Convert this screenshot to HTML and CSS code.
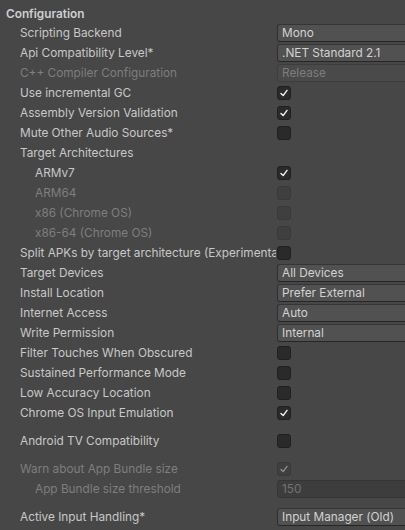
FILE: index.html
```html
<!DOCTYPE html>
<html>
<head>
<meta charset="utf-8">
<link rel="stylesheet" href="styles.css">
</head>
<body>
<div class="panel">
  <div class="header">Configuration</div>

  <div class="row"><div class="label">Scripting Backend</div><div class="field"><div class="popup">Mono</div></div></div>
  <div class="row"><div class="label">Api Compatibility Level*</div><div class="field"><div class="popup">.NET Standard 2.1</div></div></div>
  <div class="row"><div class="label dis">C++ Compiler Configuration</div><div class="field"><div class="popup off">Release</div></div></div>
  <div class="row"><div class="label">Use incremental GC</div><div class="field"><div class="cb on"><svg viewBox="0 0 14 14"><polyline points="3.5,7.5 6,10 10.5,4"/></svg></div></div></div>
  <div class="row"><div class="label">Assembly Version Validation</div><div class="field"><div class="cb on"><svg viewBox="0 0 14 14"><polyline points="3.5,7.5 6,10 10.5,4"/></svg></div></div></div>
  <div class="row"><div class="label">Mute Other Audio Sources*</div><div class="field"><div class="cb"></div></div></div>
  <div class="row"><div class="label">Target Architectures</div><div class="field"></div></div>
  <div class="row"><div class="label sub">ARMv7</div><div class="field"><div class="cb on"><svg viewBox="0 0 14 14"><polyline points="3.5,7.5 6,10 10.5,4"/></svg></div></div></div>
  <div class="row"><div class="label sub dis">ARM64</div><div class="field"><div class="cb off"></div></div></div>
  <div class="row"><div class="label sub dis">x86 (Chrome OS)</div><div class="field"><div class="cb off"></div></div></div>
  <div class="row"><div class="label sub dis">x86-64 (Chrome OS)</div><div class="field"><div class="cb off"></div></div></div>
  <div class="row"><div class="label">Split APKs by target architecture (Experimental)</div><div class="field"><div class="cb"></div></div></div>
  <div class="row"><div class="label">Target Devices</div><div class="field"><div class="popup">All Devices</div></div></div>
  <div class="row"><div class="label">Install Location</div><div class="field"><div class="popup">Prefer External</div></div></div>
  <div class="row"><div class="label">Internet Access</div><div class="field"><div class="popup">Auto</div></div></div>
  <div class="row"><div class="label">Write Permission</div><div class="field"><div class="popup">Internal</div></div></div>
  <div class="row"><div class="label">Filter Touches When Obscured</div><div class="field"><div class="cb"></div></div></div>
  <div class="row"><div class="label">Sustained Performance Mode</div><div class="field"><div class="cb"></div></div></div>
  <div class="row"><div class="label">Low Accuracy Location</div><div class="field"><div class="cb"></div></div></div>
  <div class="row"><div class="label">Chrome OS Input Emulation</div><div class="field"><div class="cb on"><svg viewBox="0 0 14 14"><polyline points="3.5,7.5 6,10 10.5,4"/></svg></div></div></div>

  <div class="row gap"><div class="label">Android TV Compatibility</div><div class="field"><div class="cb"></div></div></div>

  <div class="row gap"><div class="label dis">Warn about App Bundle size</div><div class="field"><div class="cb off on"><svg viewBox="0 0 14 14"><polyline points="3.5,7.5 6,10 10.5,4"/></svg></div></div></div>
  <div class="row"><div class="label sub dis">App Bundle size threshold</div><div class="field"><div class="text off">150</div></div></div>

  <div class="row gap"><div class="label">Active Input Handling*</div><div class="field"><div class="popup">Input Manager (Old)</div></div></div>
</div>
</body>
</html>
```

FILE: styles.css
```css
html, body {
  margin: 0;
  padding: 0;
  background: #474747;
  overflow: hidden;
}
body {
  width: 405px;
  height: 530px;
  font-family: Inter, "Noto Sans", sans-serif;
  font-size: 11.8px;
  color: #c8c8c8;
}
.panel {
  padding-top: 5px;
}
.header {
  height: 18px;
  line-height: 18px;
  padding-left: 6px;
  font-weight: 600;
  color: #cfcfcf;
}
.row {
  display: flex;
  align-items: center;
  height: 20px;
  padding-left: 20px;
}
.row.gap {
  margin-top: 8px;
}
.label {
  width: 256px;
  flex: none;
  white-space: nowrap;
  overflow: hidden;
  line-height: 20px;
}
.label.sub {
  padding-left: 15px;
  width: 241px;
}
.label.dis {
  color: #7e7e7e;
}
.field {
  margin-left: 1px;
  flex: 1;
  display: flex;
  align-items: center;
  margin-right: -20px;
}
.popup, .text {
  flex: 1;
  height: 16px;
  line-height: 16px;
  padding-left: 4px;
  background: #515151;
  border: 1px solid #2f2f2f;
  border-top-color: #353535;
  border-bottom-color: #262626;
  border-radius: 3px;
  color: #d2d2d2;
  white-space: nowrap;
}
.popup.off {
  background: #4a4a4a;
  border-color: #3d3d3d;
  color: #7e7e7e;
}
.text.off {
  background: #3d3d3d;
  border-color: #363636;
  color: #737373;
}
.cb {
  width: 12px;
  height: 12px;
  background: #2a2a2a;
  border: 1px solid #202020;
  border-radius: 3px;
  display: flex;
}
.cb svg {
  width: 12px;
  height: 12px;
}
.cb polyline {
  fill: none;
  stroke: #eeeeee;
  stroke-width: 1.7;
  stroke-linecap: round;
  stroke-linejoin: round;
}
.cb.off {
  background: #3f3f3f;
  border-color: #393939;
}
.cb.off polyline {
  stroke: #8a8a8a;
}
```
